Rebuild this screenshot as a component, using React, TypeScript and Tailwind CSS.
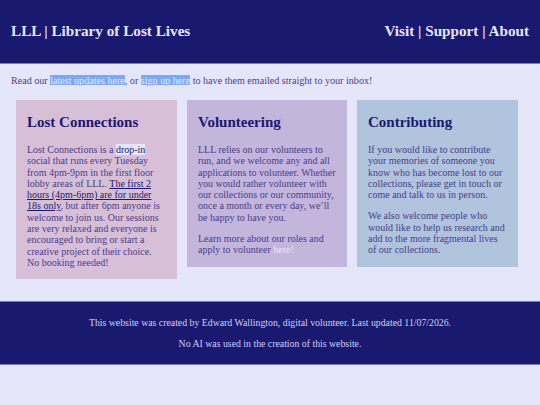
import React from "react";

export default function App() {
  return (
    <div className="min-h-[405px] bg-[#e6e6fa] font-['Liberation_Serif',serif] text-[#483d8b]">
      <header className="flex h-[64px] items-center justify-between border-b border-[#7b7bc0] bg-[#191970] px-[11px] text-[#e6e6fa]">
        <h1 className="text-[15.2px] font-bold">LLL | Library of Lost Lives</h1>
        <nav className="text-[15.2px] font-bold">Visit | Support | About</nav>
      </header>
      <p className="px-[11px] pt-[10px] text-[10.1px] leading-[13px]">
        Read our{" "}
        <a className="bg-[#7fa8ef] text-[#e6e6fa] underline">latest updates here</a>, or{" "}
        <a className="bg-[#7fa8ef] text-[#e6e6fa] underline">sign up here</a> to have them emailed straight to your inbox!
      </p>
      <main className="flex items-start gap-[10px] pl-[16px] pt-[13px]">
        <section className="w-[161px] bg-[#d8bfd8] px-[11px] pb-[11px] pt-[13px]">
          <h2 className="text-[15px] font-bold leading-[18px] text-[#191970]">Lost Connections</h2>
          <p className="mt-[13px] text-[10px] leading-[11.3px]">
            Lost Connections is a <a className="bg-[#e6e6fa] text-[#191970]">drop-in</a> social that runs every Tuesday
            from 4pm-9pm in the first floor lobby areas of LLL.{" "}
            <span className="text-[#191970] underline">The first 2 hours (4pm-6pm) are for under 18s only</span>, but
            after 6pm anyone is welcome to join us. Our sessions are very relaxed and everyone is encouraged to bring or
            start a creative project of their choice. No booking needed!
          </p>
        </section>
        <section className="w-[160px] bg-[#c4b5dc] px-[11px] pb-[11px] pt-[13px]">
          <h2 className="text-[15px] font-bold leading-[18px] text-[#191970]">Volunteering</h2>
          <p className="mt-[13px] text-[10px] leading-[11.3px]">
            LLL relies on our volunteers to run, and we welcome any and all applications to volunteer. Whether you would
            rather volunteer with our collections or our community, once a month or every day, we’ll be happy to have
            you.
          </p>
          <p className="mt-[10px] text-[10px] leading-[11.3px]">
            Learn more about our roles and apply to volunteer <a className="text-[#e6e6fa]">here!</a>
          </p>
        </section>
        <section className="w-[161px] bg-[#b0c4de] px-[11px] pb-[11px] pt-[13px]">
          <h2 className="text-[15px] font-bold leading-[18px] text-[#191970]">Contributing</h2>
          <p className="mt-[13px] text-[10px] leading-[11.3px]">
            If you would like to contribute your memories of someone you know who has become lost to our collections,
            please get in touch or come and talk to us in person.
          </p>
          <p className="mt-[10px] text-[10px] leading-[11.3px]">
            We also welcome people who would like to help us research and add to the more fragmental lives of our
            collections.
          </p>
        </section>
      </main>
      <footer className="mt-[22px] flex h-[64px] flex-col items-center justify-center gap-[9px] border-y border-[#7b7bc0] bg-[#191970] text-[9.8px] leading-[12px] text-[#d0d0f0]">
        <p>This website was created by Edward Wallington, digital volunteer. Last updated 11/07/2026.</p>
        <p>No AI was used in the creation of this website.</p>
      </footer>
    </div>
  );
}
